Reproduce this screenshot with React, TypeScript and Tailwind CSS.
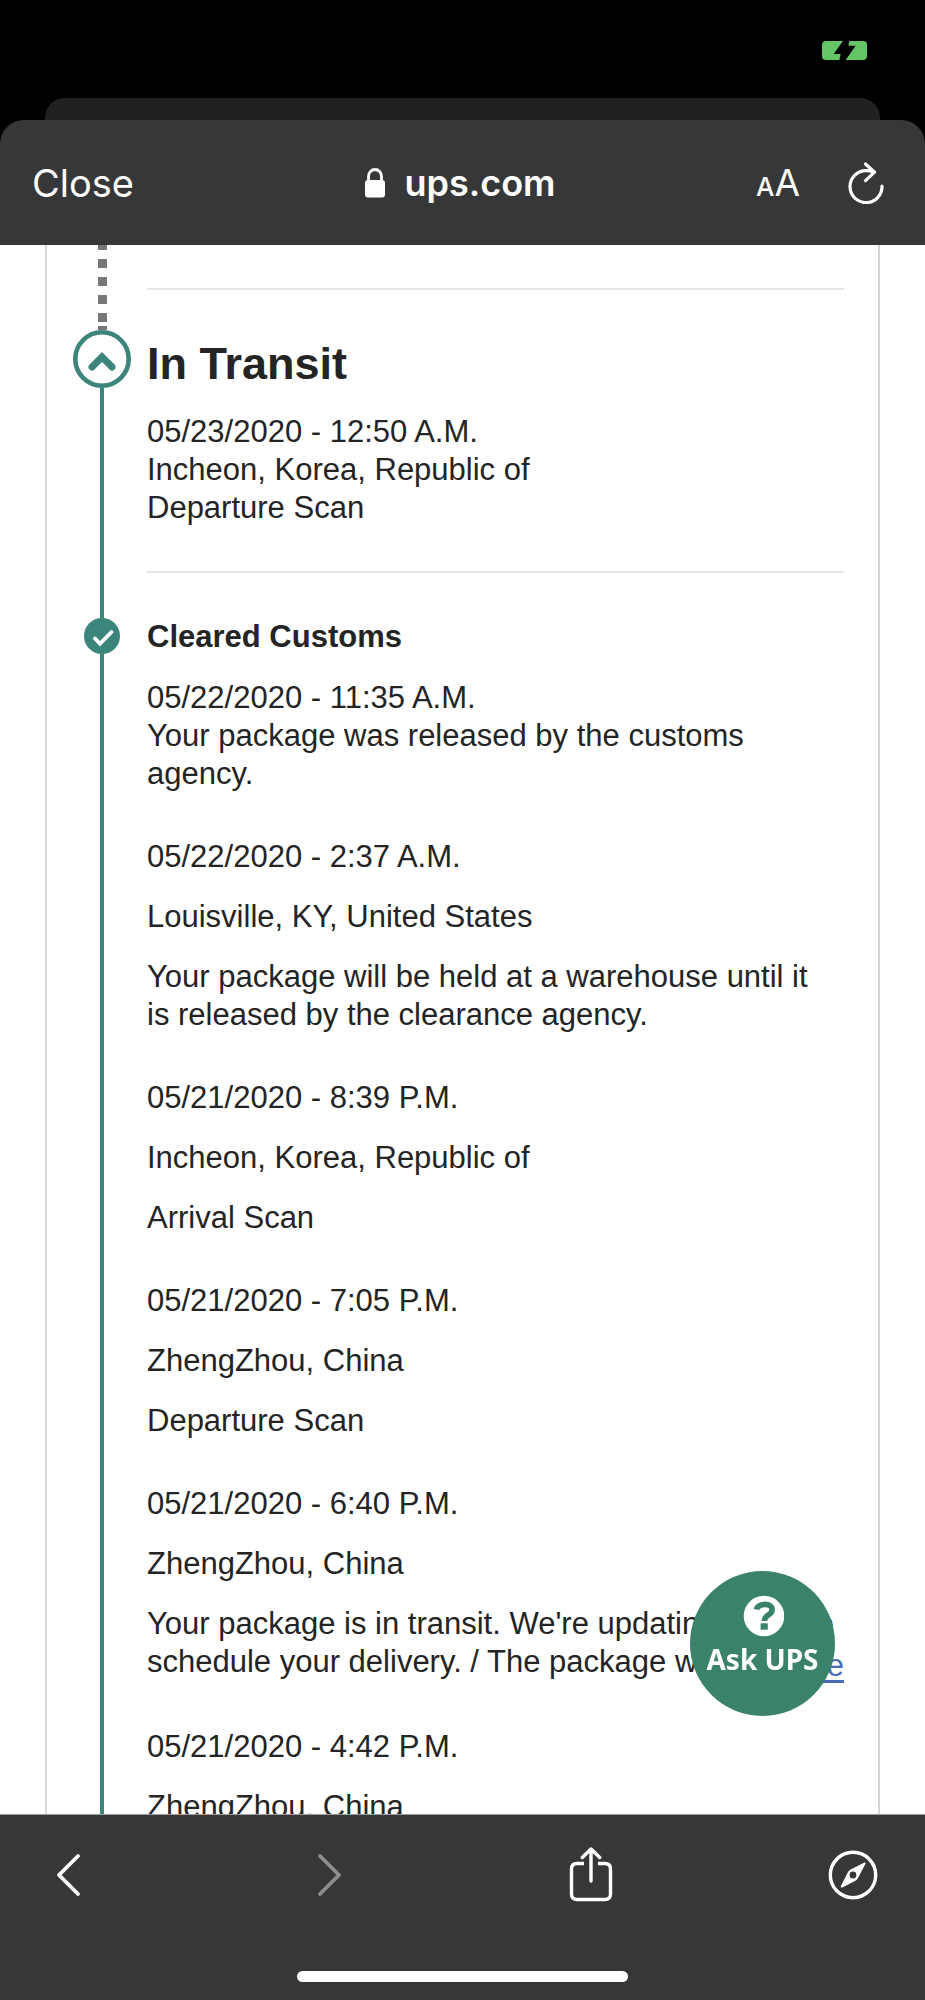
import React from "react";

type ScanEvent = { lines: React.ReactNode[] };

const events: ScanEvent[] = [
  {
    lines: [
      "05/22/2020 - 2:37 A.M.",
      "Louisville, KY, United States",
      "Your package will be held at a warehouse until it is\u00a0released by the clearance agency.",
    ],
  },
  { lines: ["05/21/2020 - 8:39 P.M.", "Incheon, Korea, Republic of", "Arrival Scan"] },
  { lines: ["05/21/2020 - 7:05 P.M.", "ZhengZhou, China", "Departure Scan"] },
  {
    lines: [
      "05/21/2020 - 6:40 P.M.",
      "ZhengZhou, China",
      <>
        Your package is in transit. We're updating plans to
        <span className="flex h-10 items-start justify-between whitespace-nowrap">
          <span>schedule your delivery. / The package will</span>
          <a href="#more" className="pt-1 text-[#4a6cb3] underline underline-offset-4">
            More
          </a>
        </span>
      </>,
    ],
  },
  { lines: ["05/21/2020 - 4:42 P.M.", "ZhengZhou, China"] },
];

function StatusBar() {
  return (
    <div className="flex h-[98px] shrink-0 justify-end pr-[58px] pt-[41px]">
      <svg className="h-[19px] w-[45px]" viewBox="0 0 135 57" aria-label="Battery charging">
        <rect width="135" height="57" rx="12" fill="#65c466" />
        <path d="M63 0 35 39H56L52 57H71L101 14H79L82 0Z" fill="#000" />
      </svg>
    </div>
  );
}

function BrowserHeader() {
  return (
    <header className="flex h-[125px] shrink-0 items-center rounded-t-[24px] bg-[#363738] px-8 font-['Inter',sans-serif] text-white">
      <div className="flex-1">
        <button type="button" className="text-[38px] leading-[48px]">
          Close
        </button>
      </div>
      <div className="flex items-center gap-[18px] pl-1">
        <svg className="h-[30px] w-[22px]" viewBox="0 0 22 30" aria-hidden="true">
          <rect x="1" y="12" width="20" height="17.5" rx="3" fill="#fff" />
          <path d="M4.5 14V8.5a6.5 7 0 0 1 13 0V14" fill="none" stroke="#fff" strokeWidth="2.8" />
        </svg>
        <span className="text-[36px] font-semibold leading-[48px]">ups.com</span>
      </div>
      <div className="flex flex-1 items-center justify-end gap-12 pr-[9px]">
        <button type="button" aria-label="Text size" className="flex items-baseline pt-1 leading-[48px]">
          <span className="text-[26px] font-medium">A</span>
          <span className="text-[37px]">A</span>
        </button>
        <button type="button" aria-label="Reload">
          <svg className="h-[42px] w-[36px]" viewBox="0 0 36 42" fill="none" stroke="#fff" strokeWidth="3.2" strokeLinecap="round" strokeLinejoin="round">
            <path d="M34 24A16 16 0 1 1 18 8.6Q22 8.6 26 10" />
            <path d="M17.5 2 26.5 10.2 17.5 18.6" />
          </svg>
        </button>
      </div>
    </header>
  );
}

function Timeline() {
  return (
    <div className="mx-[45px] border-x-2 border-[#d6d6d6] pl-[27px] pr-[34px]">
      <div className="flex h-[85px] gap-[17px]">
        <div className="flex w-14 shrink-0 flex-col items-center">
          <div className="w-[9px] flex-1 bg-[repeating-linear-gradient(to_bottom,#777_0px,#777_5px,transparent_5px,transparent_14px,#777_14px,#777_18px)]" />
          <div className="h-1 w-[9px] bg-[#777]" />
        </div>
        <div className="flex-1 pt-[43px]">
          <hr className="border-t-2 border-[#e6e6e6]" />
        </div>
      </div>

      <section className="flex gap-[17px]">
        <div className="flex w-14 shrink-0 flex-col items-center">
          <button type="button" aria-label="Collapse In Transit" className="shrink-0">
            <svg className="size-[58px]" viewBox="0 0 58 58" fill="none" stroke="#3b857c">
              <circle cx="29" cy="29" r="26.7" strokeWidth="4.6" />
              <path d="M19 37 29 27 39 37" strokeWidth="7" strokeLinecap="round" />
            </svg>
          </button>
          <div className="w-1 flex-1 bg-[#3b857c]" />
        </div>
        <div className="flex-1 pb-[45px] pt-[10px]">
          <h2 className="text-[45px] font-bold leading-[48px]">In Transit</h2>
          <div className="mt-[25px]">
            <p>05/23/2020 - 12:50 A.M.</p>
            <p>Incheon, Korea, Republic of</p>
            <p>Departure Scan</p>
          </div>
          <hr className="mt-11 border-t-2 border-[#e6e6e6]" />
        </div>
      </section>

      <section className="flex gap-[17px]">
        <div className="flex w-14 shrink-0 flex-col items-center">
          <svg className="size-9 shrink-0" viewBox="0 0 36 36" aria-hidden="true">
            <circle cx="18" cy="18" r="18" fill="#3b857c" />
            <path d="M11 20.5 16 25.8 27.5 14" fill="none" stroke="#fff" strokeWidth="3.8" strokeLinecap="round" />
          </svg>
          <div className="w-1 flex-1 bg-[#3b857c]" />
        </div>
        <div className="flex-1">
          <h3 className="font-bold">Cleared Customs</h3>
          <div className="mt-[23px]">
            <p>05/22/2020 - 11:35 A.M.</p>
            <p>Your package was released by the customs agency.</p>
          </div>
          {events.map((event, i) => (
            <div key={i} className="mt-[45px] flex flex-col gap-[22px]">
              {event.lines.map((line, j) => (
                <p key={j}>{line}</p>
              ))}
            </div>
          ))}
        </div>
      </section>
    </div>
  );
}

function AskButton() {
  return (
    <button
      type="button"
      className="absolute bottom-[98px] right-[90px] flex size-[145px] flex-col items-center rounded-full bg-[#3a8269] pt-6 font-['Noto_Sans',sans-serif] text-[28px] font-bold leading-[44px] text-white"
    >
      <svg className="size-[42px] shrink-0" viewBox="0 0 42 42" aria-hidden="true">
        <circle cx="22" cy="21" r="20.3" fill="#fff" />
        <path d="M14.5 14.5C15.5 8 31 7 30 15.5C29.5 20.5 22.5 19.5 22.3 26" fill="none" stroke="#3a8269" strokeWidth="5.6" />
        <rect x="18.6" y="28.3" width="7.2" height="6.4" fill="#3a8269" />
      </svg>
      Ask UPS
    </button>
  );
}

function BottomBar() {
  return (
    <footer className="flex h-[186px] shrink-0 flex-col items-center justify-between border-t border-[#9a9b9b] bg-[#363738] pb-[18px] pt-8">
      <nav className="flex w-full items-center justify-between pl-9 pr-10">
        <button type="button" aria-label="Back" className="flex w-16 justify-center">
          <svg className="h-[44px] w-[26px]" viewBox="0 0 26 44" fill="none" stroke="#fff" strokeWidth="3.8" strokeLinecap="round" strokeLinejoin="round">
            <path d="M23 3 4 22 23 41" />
          </svg>
        </button>
        <button type="button" aria-label="Forward" disabled className="flex w-16 justify-center">
          <svg className="h-[44px] w-[26px]" viewBox="0 0 26 44" fill="none" stroke="#8d8e8e" strokeWidth="3.8" strokeLinecap="round" strokeLinejoin="round">
            <path d="M3 3 22 22 3 41" />
          </svg>
        </button>
        <button type="button" aria-label="Share" className="flex w-16 justify-center">
          <svg className="h-[56px] w-[44px]" viewBox="0 0 44 56" fill="none" stroke="#fff" strokeWidth="3.4" strokeLinecap="round" strokeLinejoin="round">
            <path strokeLinecap="butt" d="M15 16.5H8Q2.5 16.5 2.5 22V47Q2.5 52.5 8 52.5H36Q41.5 52.5 41.5 47V22Q41.5 16.5 36 16.5H29" />
            <path d="M22 34V2M13.3 10.5 22 2 30.7 10.5" />
          </svg>
        </button>
        <button type="button" aria-label="Open in Safari" className="flex w-16 justify-center">
          <svg className="size-[50px]" viewBox="0 0 50 50">
            <circle cx="25" cy="25" r="22.7" fill="none" stroke="#fff" strokeWidth="3.4" />
            <path fill="#fff" fillRule="evenodd" d="M36.5 12.6Q38 12.3 37.5 13.8L30 28Q29 30 27 31L14.3 37.4Q12.4 38 12.8 36.2L19.5 23Q20.5 20.5 22.6 19.4ZM25 21.6a3.4 3.4 0 1 0 0 6.8a3.4 3.4 0 1 0 0-6.8Z" />
          </svg>
        </button>
      </nav>
      <div className="h-[11px] w-[331px] rounded-full bg-white" />
    </footer>
  );
}

export default function App() {
  return (
    <div className="flex h-screen flex-col bg-black">
      <StatusBar />
      <div className="mx-[45px] h-[22px] shrink-0 rounded-t-[20px] bg-[#212123]" />
      <BrowserHeader />
      <div className="relative min-h-0 flex-1 bg-white">
        <main className="h-full overflow-y-auto bg-white font-['Liberation_Sans',Arial,sans-serif] text-[31px] leading-[38px] text-[#242424] [scrollbar-width:none]">
          <Timeline />
        </main>
        <AskButton />
      </div>
      <BottomBar />
    </div>
  );
}
